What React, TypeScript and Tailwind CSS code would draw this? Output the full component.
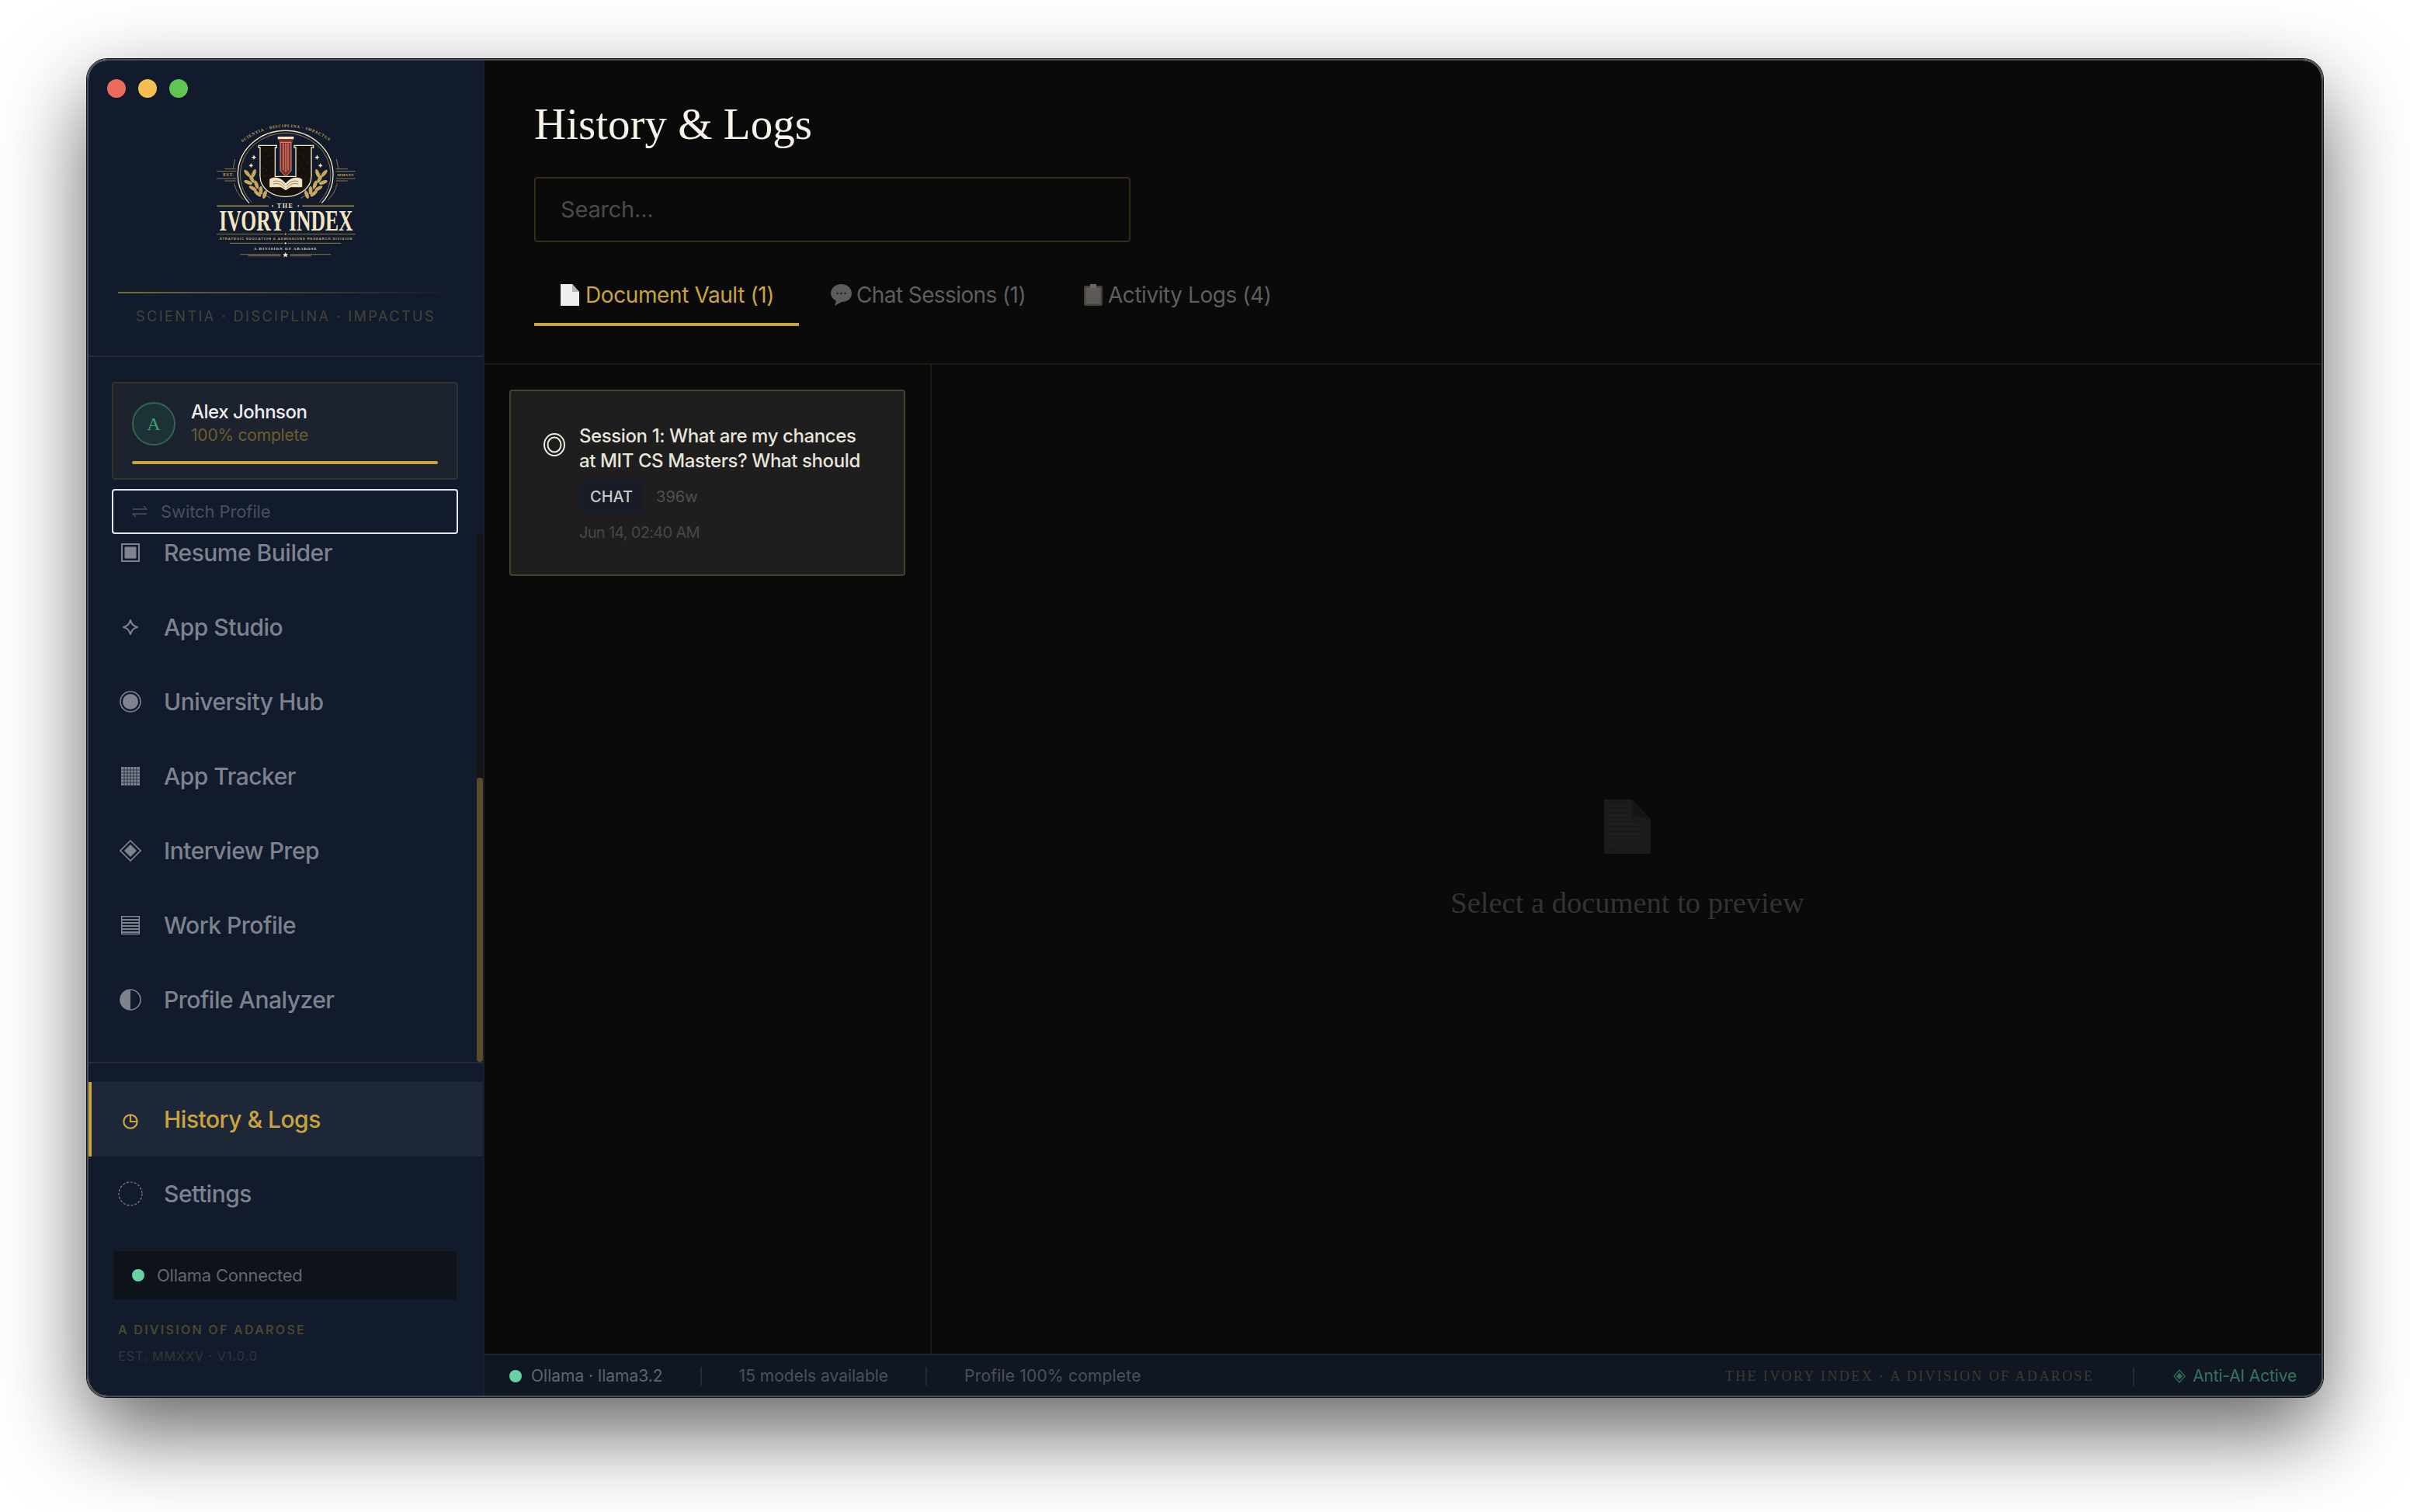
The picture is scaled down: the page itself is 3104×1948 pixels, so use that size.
import type { ReactNode } from "react";

const sans = "font-['Inter','Noto_Sans',sans-serif]";
const serif = "font-['Liberation_Serif',serif]";

function Logo() {
  const gold = "#c9a85c";
  const ivory = "#f3e6c4";
  const leaves = [
    [232, 250, 40], [250, 272, 30], [268, 294, 20], [285, 316, 0], [300, 332, -20],
    [258, 250, -20], [236, 285, 70], [254, 308, 60], [272, 328, 50],
  ];
  const specks = Array.from({ length: 60 }, (_, i) => ({
    x: 290 + ((i * 37) % 180),
    y: 150 + ((i * 53) % 185),
  })).filter((s) => s.x < 340 || s.x > 420 || s.y > 320);
  return (
    <svg width="260" height="210" viewBox="-9 0 780 630" className="mx-auto">
      <defs>
        <path id="motto-arc" d="M 186 155 A 278 278 0 0 1 578 150" />
      </defs>
      <text fontFamily="'Liberation Serif',serif" fontSize="16" fontWeight="700" fill={gold} letterSpacing="2.5" textAnchor="middle">
        <textPath href="#motto-arc" startOffset="50%">SCIENTIA · DISCIPLINA · IMPACTUS</textPath>
      </text>
      <path d="M 240 365 A 184 170 0 1 1 520 365" fill="none" stroke={ivory} strokeWidth="4" />
      <path d="M 249 362 A 175 161 0 1 1 511 362" fill="none" stroke={gold} strokeWidth="2" />
      <path d="M 185 195 L 178 230 M 182 290 Q 190 325 218 352 M 577 195 L 584 230 M 580 290 Q 572 325 545 352" fill="none" stroke={gold} strokeWidth="2" />
      <path d="M 276 142 H 346 V 150 H 340 V 262 H 420 V 150 H 414 V 142 H 488 V 150 H 480 V 262 C 480 310 430 340 380 340 C 330 340 282 310 282 262 V 150 H 276 Z" fill="#15120e" stroke={ivory} strokeWidth="4" />
      {specks.map((s, i) => (
        <circle key={i} cx={s.x} cy={s.y} r="1.4" fill="#7c6431" />
      ))}
      <rect x="350" y="108" width="62" height="10" fill={ivory} />
      <rect x="354" y="118" width="54" height="12" fill="#8f2a22" />
      <path d="M 360 130 H 402 V 240 L 381 262 L 360 240 Z" fill="#8f2a22" stroke={ivory} strokeWidth="2" />
      <path d="M 372 134 V 238 M 381 134 V 246 M 390 134 V 238" stroke={ivory} strokeWidth="2" />
      <path d="M 318 304 V 272 C 340 258 365 268 381 288 C 397 268 422 258 445 272 V 304 H 400 L 381 316 L 362 304 Z" fill={ivory} stroke="#15120e" strokeWidth="1" />
      <path d="M 332 282 C 350 274 368 284 378 298 M 332 292 C 350 284 366 294 376 306 M 430 282 C 412 274 394 284 384 298 M 430 292 C 412 284 396 294 386 306" fill="none" stroke="#56513f" strokeWidth="2" />
      <path d="M 248 250 Q 262 320 322 346 M 514 250 Q 500 320 440 346" fill="none" stroke={gold} strokeWidth="2" />
      {leaves.map(([x, y, r], i) => (
        <g key={i}>
          <ellipse cx={x} cy={y} rx="7" ry="17" fill={gold} transform={`rotate(${-r} ${x} ${y})`} />
          <ellipse cx={762 - x} cy={y} rx="7" ry="17" fill={gold} transform={`rotate(${r} ${762 - x} ${y})`} />
        </g>
      ))}
      <path d="M 258 178 L 261 185 L 268 188 L 261 191 L 258 198 L 255 191 L 248 188 L 255 185 Z M 247 211 L 250 217 L 256 220 L 250 223 L 247 229 L 244 223 L 238 220 L 244 217 Z M 502 178 L 505 185 L 512 188 L 505 191 L 502 198 L 499 191 L 492 188 L 499 185 Z M 515 211 L 518 217 L 524 220 L 518 223 L 515 229 L 512 223 L 506 220 L 512 217 Z" fill={ivory} />
      <path d="M 145 233 H 188 M 115 242 H 190 M 115 270 H 190 M 145 279 H 188 M 575 233 H 620 M 575 242 H 650 M 575 270 H 650 M 575 279 H 620" stroke={gold} strokeWidth="2" />
      <text x="160" y="262" textAnchor="middle" fontFamily="'Liberation Serif',serif" fontSize="17" fontWeight="700" fill={gold} letterSpacing="2">EST.</text>
      <text x="613" y="262" textAnchor="middle" fontFamily="'Liberation Serif',serif" fontSize="15" fontWeight="700" fill={gold} letterSpacing="1">MMXXV</text>
      <path d="M 115 376 H 315 M 445 376 H 645" stroke={gold} strokeWidth="4" />
      <circle cx="330" cy="376" r="3" fill={ivory} />
      <circle cx="430" cy="376" r="3" fill={ivory} />
      <text x="380" y="383" textAnchor="middle" fontFamily="'Liberation Serif',serif" fontSize="24" fontWeight="700" fill={ivory} letterSpacing="5">THE</text>
      <text transform="translate(124 470) scale(0.837 1.26)" fontFamily="'Liberation Serif',serif" fontSize="92" fontWeight="700" fill={ivory}>IVORY INDEX</text>
      <path d="M 115 485 H 372 M 388 485 H 650 M 165 520 H 372 M 388 520 H 595 M 205 563 H 362 M 398 563 H 555 M 235 569 H 362 M 398 569 H 480" stroke={gold} strokeWidth="2" />
      <text x="125" y="508" textLength="512" fontFamily="'Liberation Sans',sans-serif" fontSize="13" fontWeight="700" fill={gold}>STRATEGIC EDUCATION & ADMISSIONS RESEARCH DIVISION</text>
      <text x="258" y="547" textLength="242" fontFamily="'Liberation Serif',serif" fontSize="14" fontWeight="700" fill={ivory}>A DIVISION OF ADAROSE</text>
      <path d="M 380 555 L 383 562 L 391 562 L 385 567 L 387 575 L 380 570 L 373 575 L 375 567 L 369 562 L 377 562 Z" fill={ivory} />
      <circle cx="380" cy="485" r="3.5" fill={gold} />
      <circle cx="380" cy="520" r="3.5" fill={ivory} />
    </svg>
  );
}

const iconColor = "#7f838d";

const navIcons: Record<string, ReactNode> = {
  resume: (
    <svg width="24" height="24" viewBox="0 0 24 24">
      <rect x="1" y="1" width="22" height="22" fill="none" stroke={iconColor} strokeWidth="2" />
      <rect x="4.5" y="4.5" width="15" height="15" fill={iconColor} />
    </svg>
  ),
  studio: (
    <svg width="22" height="22" viewBox="0 0 22 22">
      <path d="M 11 1.5 Q 12.5 9.5 20.5 11 Q 12.5 12.5 11 20.5 Q 9.5 12.5 1.5 11 Q 9.5 9.5 11 1.5 Z" fill="none" stroke={iconColor} strokeWidth="2" />
    </svg>
  ),
  university: (
    <svg width="28" height="28" viewBox="0 0 28 28">
      <circle cx="14" cy="14" r="13" fill="none" stroke={iconColor} strokeWidth="1.6" />
      <circle cx="14" cy="14" r="10" fill={iconColor} />
    </svg>
  ),
  tracker: (
    <svg width="24" height="24" viewBox="0 0 24 24">
      <rect width="24" height="24" fill={iconColor} />
      <path d="M 4 0 V 24 M 8 0 V 24 M 12 0 V 24 M 16 0 V 24 M 20 0 V 24 M 0 4 H 24 M 0 8 H 24 M 0 12 H 24 M 0 16 H 24 M 0 20 H 24" stroke="#121b2c" strokeWidth="0.7" />
    </svg>
  ),
  interview: (
    <svg width="28" height="28" viewBox="0 0 28 28">
      <path d="M 14 1 L 27 14 L 14 27 L 1 14 Z" fill="none" stroke={iconColor} strokeWidth="1.6" />
      <path d="M 14 6 L 22 14 L 14 22 L 6 14 Z" fill={iconColor} />
    </svg>
  ),
  work: (
    <svg width="24" height="24" viewBox="0 0 24 24">
      <rect x="0.75" y="0.75" width="22.5" height="22.5" fill="none" stroke={iconColor} strokeWidth="1.5" />
      <path d="M 0 5 H 24 M 0 9 H 24 M 0 13 H 24 M 0 17 H 24 M 0 21 H 24" stroke={iconColor} strokeWidth="2" />
    </svg>
  ),
  analyzer: (
    <svg width="28" height="28" viewBox="0 0 28 28">
      <circle cx="14" cy="14" r="13" fill="none" stroke={iconColor} strokeWidth="1.6" />
      <path d="M 14 1 A 13 13 0 0 0 14 27 Z" fill={iconColor} />
    </svg>
  ),
  history: (
    <svg width="20" height="20" viewBox="0 0 20 20" className="translate-y-[3px]">
      <circle cx="10" cy="10" r="8.7" fill="none" stroke="#c9a43e" strokeWidth="2.2" />
      <path d="M 10 1 V 10 H 19" fill="none" stroke="#c9a43e" strokeWidth="2.2" />
    </svg>
  ),
  settings: (
    <svg width="32" height="32" viewBox="0 0 32 32">
      <circle cx="16" cy="16" r="15" fill="none" stroke={iconColor} strokeWidth="1.2" strokeDasharray="3 2" />
    </svg>
  ),
};

const scrollItems = [
  { key: "resume", label: "Resume Builder" },
  { key: "studio", label: "App Studio" },
  { key: "university", label: "University Hub" },
  { key: "tracker", label: "App Tracker" },
  { key: "interview", label: "Interview Prep" },
  { key: "work", label: "Work Profile" },
  { key: "analyzer", label: "Profile Analyzer" },
];

function NavItem({ icon, label, active }: { icon: ReactNode; label: string; active?: boolean }) {
  return (
    <div
      className={
        active
          ? "flex h-[96px] shrink-0 items-center border-l-4 border-[#c9a43e] bg-[#1e2738] pl-[26px] text-[#c9a43e]"
          : "flex h-[96px] shrink-0 items-center border-l-4 border-transparent pl-[26px] text-[#7d828c]"
      }
    >
      <span className="flex w-[48px] justify-center">{icon}</span>
      <span className="ml-[19px] text-[30px] font-medium tracking-[-0.5px]">{label}</span>
    </div>
  );
}

function Sidebar() {
  return (
    <aside className="flex h-full w-[508px] shrink-0 flex-col bg-[#121b2c]">
      <div className="h-[382px] shrink-0 border-b-2 border-[#262b35]">
        <div className="flex gap-[16px] pl-[24px] pt-[24px]">
          <span className="h-[24px] w-[24px] rounded-full bg-[#ec6a5e]" />
          <span className="h-[24px] w-[24px] rounded-full bg-[#f4bf4f]" />
          <span className="h-[24px] w-[24px] rounded-full bg-[#61c554]" />
        </div>
        <div className="mt-[14px]">
          <Logo />
        </div>
        <div className="ml-[38px] mt-[26px] h-[2px] w-[430px] bg-gradient-to-r from-[#7a6a3a] to-transparent" />
        <p className="mt-[16px] text-center text-[18px] tracking-[2.5px] text-[#45423a]">SCIENTIA · DISCIPLINA · IMPACTUS</p>
      </div>

      <div className="shrink-0 pl-[30px] pr-[32px] pt-[32px]">
        <div className="h-[126px] rounded-[4px] border-2 border-[#33322e] bg-[#1c222e] px-[24px] pt-[22px]">
          <div className="flex items-center gap-[20px]">
            <div className={`flex h-[56px] w-[56px] items-center justify-center rounded-full border-2 border-[#2f6650] bg-[#1d3236] text-[24px] text-[#3f9f72] ${serif}`}>A</div>
            <div>
              <div className="text-[24px] font-medium leading-[30px] tracking-[-0.5px] text-[#ededed]">Alex Johnson</div>
              <div className="text-[21px] leading-[30px] tracking-[-0.2px] text-[#6e5d30]">100% complete</div>
            </div>
          </div>
          <div className="mt-[18px] h-[4px] rounded-full bg-[#c9a43e]" />
        </div>
        <div className="mt-[12px] flex h-[58px] items-center rounded-[4px] border-2 border-[#e5e7eb] pl-[24px] text-[#4a4f5a]">
          <svg width="20" height="16" viewBox="0 0 20 16" fill="none" stroke="#4a4f5a" strokeWidth="1.4">
            <path d="M 1 5 H 19 L 15 1 M 19 11 H 1 L 5 15" />
          </svg>
          <span className="ml-[17px] text-[22px] tracking-[-0.1px]">Switch Profile</span>
        </div>
      </div>

      <div className="relative flex h-[680px] shrink-0 flex-col justify-end overflow-hidden pb-[32px]">
        {scrollItems.map((item) => (
          <NavItem key={item.key} icon={navIcons[item.key]} label={item.label} />
        ))}
        <div className="absolute bottom-0 right-0 top-0 w-[8px] bg-[#151515]">
          <div className="absolute bottom-0 left-0 right-0 top-[314px] rounded-full bg-[#5a4c2b]" />
        </div>
      </div>

      <div className="flex-1 border-t-2 border-[#262b35] pt-[24px]">
        <NavItem icon={navIcons.history} label="History & Logs" active />
        <NavItem icon={navIcons.settings} label="Settings" />
        <div className="ml-[30px] mr-[32px] mt-[24px] flex h-[66px] items-center rounded-[4px] border-2 border-[#161a24] bg-[#0e121b] pl-[24px]">
          <span className="h-[16px] w-[16px] rounded-full bg-[#68d3a0]" />
          <span className="ml-[16px] text-[22px] tracking-[-0.25px] text-[#626670]">Ollama Connected</span>
        </div>
        <p className="ml-[38px] mt-[24px] text-[16px] font-semibold leading-[26px] tracking-[2.3px] text-[#4b4630]">A DIVISION OF ADAROSE</p>
        <p className="ml-[38px] mt-[8px] text-[16px] leading-[26px] tracking-[1.05px] text-[#353530]">EST. MMXXV · V1.0.0</p>
      </div>
    </aside>
  );
}

function Tabs() {
  return (
    <div className="mt-[32px] flex h-[76px] items-stretch">
      <div className="flex w-[341px] items-center border-b-4 border-[#c9a43e] pl-[34px]">
        <svg width="24" height="28" viewBox="0 0 24 28">
          <path d="M 0 0 H 15 L 24 10 V 28 H 0 Z" fill="#eeeeee" />
          <path d="M 15 0 L 24 10 H 15 Z" fill="#b5b5b5" />
        </svg>
        <span className="ml-[8px] text-[28px] tracking-[-0.4px] text-[#c9a43e]">Document Vault (1)</span>
      </div>
      <div className="flex w-[324px] items-center border-b-4 border-transparent pl-[41px]">
        <svg width="27" height="28" viewBox="0 0 27 28">
          <path d="M 13.5 0 C 21 0 27 5 27 12 C 27 19 21 23 14 23 L 5 28 L 7 21.5 C 3 19.5 0 16 0 12 C 0 5 6 0 13.5 0 Z" fill="#5c5c5c" />
          <circle cx="8.5" cy="12" r="1.3" fill="#222" />
          <circle cx="13.5" cy="12" r="1.3" fill="#222" />
          <circle cx="18.5" cy="12" r="1.3" fill="#222" />
        </svg>
        <span className="ml-[6px] text-[28px] tracking-[-0.6px] text-[#5e5e5e]">Chat Sessions (1)</span>
      </div>
      <div className="flex items-center border-b-4 border-transparent pl-[43px]">
        <svg width="24" height="28" viewBox="0 0 24 28">
          <rect y="2" width="24" height="26" rx="2" fill="#4a3f33" />
          <rect x="2.5" y="4.5" width="19" height="21" fill="#5a5a5a" />
          <rect x="8" y="0" width="8" height="5" rx="1" fill="#6a6a6a" />
        </svg>
        <span className="ml-[7px] text-[28px] tracking-[-0.45px] text-[#5e5e5e]">Activity Logs (4)</span>
      </div>
    </div>
  );
}

function StatusBar() {
  return (
    <footer className="flex h-[54px] shrink-0 items-center justify-between border-t-2 border-[#1f242e] bg-[#101723] px-[32px] pt-[2px] text-[21px] text-[#4c505a]">
      <div className="flex items-center">
        <span className="h-[16px] w-[16px] rounded-full bg-[#68d3a0]" />
        <span className="ml-[12px] text-[#5f636d]">Ollama · llama3.2</span>
        <span className="mx-[48px] h-[24px] w-[2px] bg-[#262b35]" />
        <span>15 models available</span>
        <span className="mx-[48px] h-[24px] w-[2px] bg-[#262b35]" />
        <span className="tracking-[0.2px]">Profile 100% complete</span>
      </div>
      <div className="flex items-center">
        <span className={`text-[18px] tracking-[2.4px] text-[#3d3a2e] ${serif}`}>THE IVORY INDEX · A DIVISION OF ADAROSE</span>
        <span className="mx-[50px] h-[24px] w-[2px] bg-[#262b35]" />
        <svg width="16" height="18" viewBox="0 0 16 18">
          <path d="M 8 1 L 15 9 L 8 17 L 1 9 Z" fill="none" stroke="#2f6e58" strokeWidth="1.3" />
          <path d="M 8 4.5 L 12 9 L 8 13.5 L 4 9 Z" fill="#2f6e58" />
        </svg>
        <span className="ml-[9px] tracking-[-0.15px] text-[#35745d]">Anti-AI Active</span>
      </div>
    </footer>
  );
}

export default function App() {
  return (
    <div className={`h-[1948px] w-[3104px] overflow-hidden bg-white pl-[112px] pt-[76px] ${sans}`}>
      <div className="flex h-[1724px] w-[2880px] overflow-hidden rounded-[26px] border-2 border-[#474c57] shadow-[0_0_0_1px_#111,0_44px_110px_rgba(0,0,0,0.62)]">
        <Sidebar />
        <main className="flex min-w-0 flex-1 flex-col border-l-2 border-[#1c1f26] bg-[#0a0a0a]">
          <header className="h-[392px] shrink-0 border-b-2 border-[#1d1a10] pl-[64px] pt-[50px]">
            <h1 className={`text-[57px] font-normal leading-[64px] text-[#f7f3e8] ${serif}`}>History &amp; Logs</h1>
            <div className="mt-[36px] flex h-[84px] w-[768px] items-center rounded-[4px] border-2 border-[#352b18] pl-[32px] text-[29px] tracking-[-0.2px] text-[#4a4a4a]">Search...</div>
            <Tabs />
          </header>
          <div className="flex min-h-0 flex-1">
            <section className="w-[576px] shrink-0 border-r-2 border-[#1d1a10] p-[32px]">
              <div className="flex h-[240px] w-[510px] rounded-[4px] border-2 border-[#4a4130] bg-[#1e1e1e] pl-[42px] pt-[42px]">
                <svg width="28" height="30" viewBox="0 0 28 30" className="mt-[12px] shrink-0">
                  <ellipse cx="14" cy="15" rx="13" ry="14" fill="none" stroke="#efeadf" strokeWidth="2" />
                  <ellipse cx="14" cy="15" rx="8.5" ry="9.5" fill="none" stroke="#efeadf" strokeWidth="2" />
                </svg>
                <div className="ml-[18px]">
                  <p className="text-[24px] font-medium leading-[32px] tracking-[-0.4px] text-[#e8e4d9]">
                    Session 1: What are my chances
                    <br />
                    at MIT CS Masters? What should
                  </p>
                  <div className="mt-[8px] flex items-center">
                    <span className="flex h-[44px] items-center rounded-[2px] bg-[#171c26] px-[14px] text-[20px] font-medium text-[#c8c8c8]">CHAT</span>
                    <span className="ml-[16px] text-[20px] text-[#505050]">396w</span>
                  </div>
                  <p className="mt-[8px] text-[20px] leading-[32px] tracking-[-0.7px] text-[#474747]">Jun 14, 02:40 AM</p>
                </div>
              </div>
            </section>
            <section className="flex flex-1 flex-col items-center justify-center pl-[2px] pt-[4px]">
              <svg width="60" height="70" viewBox="0 0 60 70">
                <path d="M 0 0 H 36 L 60 26 V 70 H 0 Z" fill="#1b1b1b" />
                <path d="M 37 3 L 58 26 Q 46 20 37 22 Z" fill="#141414" />
                <path d="M 6 8 H 30 M 6 14 H 30 M 6 20 H 34 M 6 26 H 36 M 6 32 H 50 M 6 38 H 50 M 6 44 H 50 M 6 50 H 50 M 6 60 H 20" stroke="#222222" strokeWidth="1.5" />
              </svg>
              <p className={`mt-[38px] text-[38.5px] leading-[50px] text-[#333333] ${serif}`}>Select a document to preview</p>
            </section>
          </div>
          <StatusBar />
        </main>
      </div>
    </div>
  );
}
